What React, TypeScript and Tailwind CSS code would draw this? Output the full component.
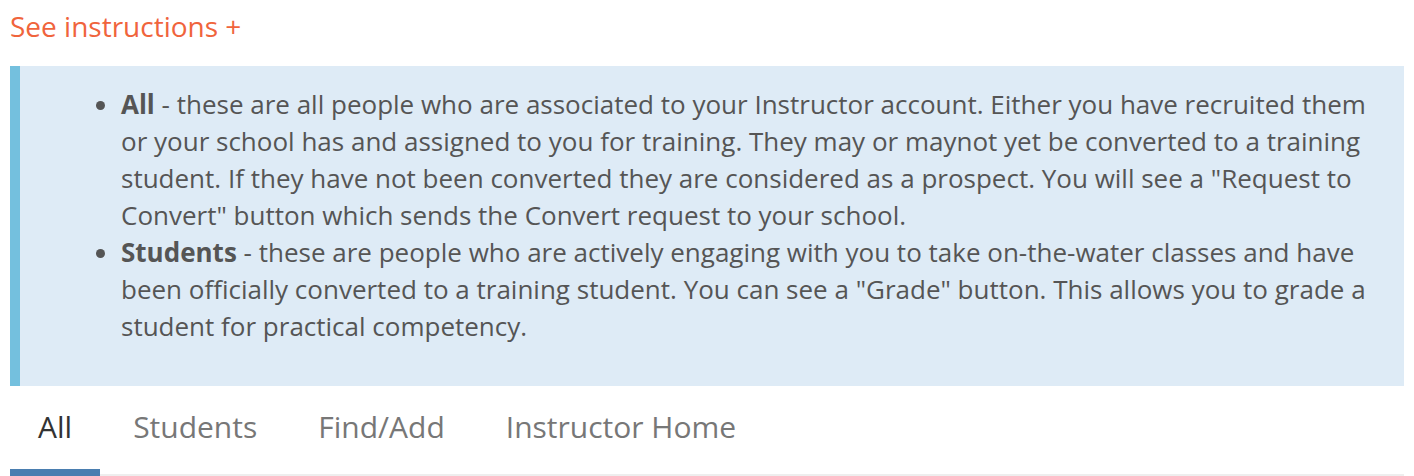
import React from "react";

const tabs = ["All", "Students", "Find/Add", "Instructor Home"];

export default function App() {
  return (
    <div className="w-[1414px] h-[476px] overflow-hidden bg-white font-['Open_Sans',sans-serif]">
      <div className="px-[10px]">
        {/* Toggle link */}
        <div className="pt-[8px] text-[28px] leading-[37px] text-[#f0643c]">
          <a href="#">See instructions +</a>
        </div>

        {/* Instructions panel */}
        <div className="mt-[21px] border-l-[10px] border-[#74c0de] bg-[#deebf6] pt-[20px] pb-[41px] pr-[20px]">
          <ul className="list-disc pl-[101px] text-[26px] leading-[37px] text-[#555]">
            <li>
              <b className="font-bold">All</b> - these are all people who are associated to your
              Instructor account. Either you have recruited them or your school has and assigned to
              you for training. They may or maynot yet be converted to a training student. If they
              have not been converted they are considered as a prospect. You will see a "Request to
              Convert" button which sends the Convert request to your school.
            </li>
            <li>
              <b className="font-bold">Students</b> - these are people who are actively engaging
              with you to take on-the-water classes and have been officially converted to a training
              student. You can see a "Grade" button. This allows you to grade a student for
              practical competency.
            </li>
          </ul>
        </div>

        {/* Tabs */}
        <div className="flex gap-[5px] border-b-2 border-[#eee]">
          {tabs.map((t, i) => (
            <a
              key={t}
              href="#"
              className={
                i === 0
                  ? "-mb-[2px] border-b-[7px] border-[#4a7eb0] px-[28px] pt-[21px] pb-[22px] text-[30px] leading-[40px] text-[#333]"
                  : "-mb-[2px] border-b-[7px] border-transparent px-[28px] pt-[21px] pb-[22px] text-[30px] leading-[40px] text-[#777]"
              }
            >
              {t}
            </a>
          ))}
        </div>
      </div>
    </div>
  );
}
